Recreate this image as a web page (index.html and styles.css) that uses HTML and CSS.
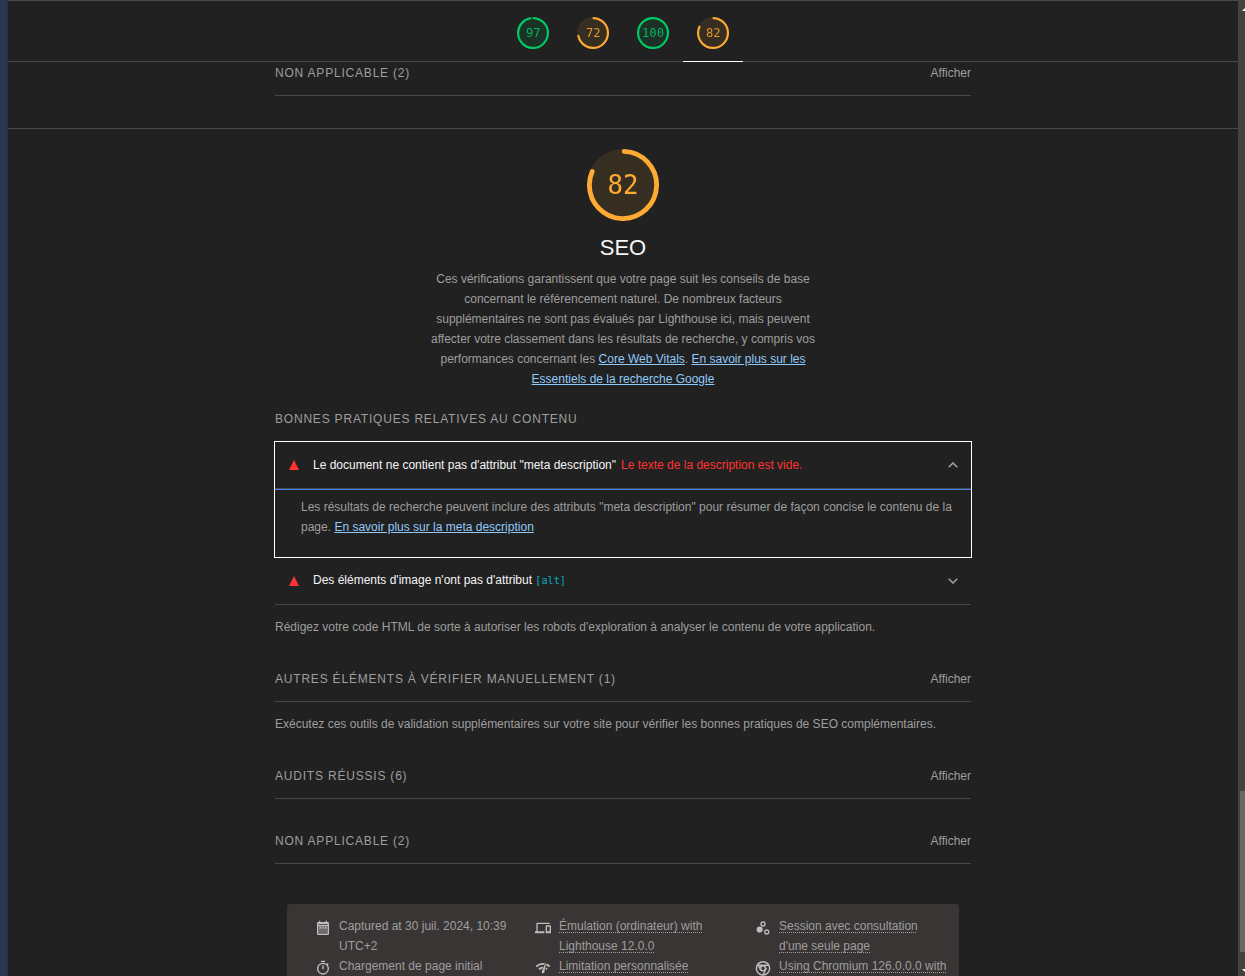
FILE: index.html
```html
<!DOCTYPE html>
<html lang="fr">
<head>
<meta charset="utf-8">
<title>Lighthouse – SEO</title>
<link rel="stylesheet" href="styles.css">
</head>
<body>
<div class="desktop-edge"></div>
<main class="report">
  <header class="scores">
    <a class="score pass"><svg viewBox="0 0 120 120"><circle class="base" cx="60" cy="60" r="60"/><circle class="arc" cx="60" cy="60" r="56" stroke-dasharray="337.3 351.86"/></svg><span>97</span></a>
    <a class="score average"><svg viewBox="0 0 120 120"><circle class="base" cx="60" cy="60" r="60"/><circle class="arc" cx="60" cy="60" r="56" stroke-dasharray="249.3 351.86"/></svg><span>72</span></a>
    <a class="score pass"><svg viewBox="0 0 120 120"><circle class="base" cx="60" cy="60" r="60"/><circle class="arc" cx="60" cy="60" r="56" stroke-dasharray="351.86 351.86"/></svg><span>100</span></a>
    <a class="score average selected"><svg viewBox="0 0 120 120"><circle class="base" cx="60" cy="60" r="60"/><circle class="arc" cx="60" cy="60" r="56" stroke-dasharray="284.5 351.86"/></svg><span>82</span></a>
  </header>
  <section class="previous">
    <div class="clump first"><span class="title">NON APPLICABLE (2)</span><span>Afficher</span></div>
  </section>
  <section class="category">
    <div class="gauge average"><svg viewBox="0 0 120 120"><circle class="base" cx="60" cy="60" r="60"/><circle class="arc" cx="60" cy="60" r="56" stroke-dasharray="284.5 351.86"/></svg><span>82</span></div>
    <h1>SEO</h1>
    <p class="intro">Ces vérifications garantissent que votre page suit les conseils de base<br>concernant le référencement naturel. De nombreux facteurs<br>supplémentaires ne sont pas évalués par Lighthouse ici, mais peuvent<br>affecter votre classement dans les résultats de recherche, y compris vos<br>performances concernant les <a>Core Web Vitals</a>. <a>En savoir plus sur les<br>Essentiels de la recherche Google</a></p>
    <h2 class="title">BONNES PRATIQUES RELATIVES AU CONTENU</h2>
    <article class="audit open">
      <div class="audit-head">
        <i class="triangle"></i><span class="audit-title">Le document ne contient pas d'attribut "meta description"</span><span class="error">Le texte de la description est vide.</span>
        <svg class="chevron" viewBox="0 0 10 6"><path d="M.7 5.3 5 1l4.300 4.300"/></svg>
      </div>
      <p class="audit-body">Les résultats de recherche peuvent inclure des attributs "meta description" pour résumer de façon concise le contenu de la<br>page. <a>En savoir plus sur la meta description</a></p>
    </article>
    <article class="audit closed">
      <div class="audit-head">
        <i class="triangle"></i><span class="audit-title">Des éléments d'image n'ont pas d'attribut <code>[alt]</code></span>
        <svg class="chevron" viewBox="0 0 10 6"><path d="M.7 .7 5 5 9.300 .7"/></svg>
      </div>
    </article>
    <p class="note">Rédigez votre code HTML de sorte à autoriser les robots d'exploration à analyser le contenu de votre application.</p>
    <div class="clump"><span class="title">AUTRES ÉLÉMENTS À VÉRIFIER MANUELLEMENT (1)</span><span>Afficher</span></div>
    <p class="note">Exécutez ces outils de validation supplémentaires sur votre site pour vérifier les bonnes pratiques de SEO complémentaires.</p>
    <div class="clump"><span class="title">AUDITS RÉUSSIS (6)</span><span>Afficher</span></div>
    <div class="clump"><span class="title">NON APPLICABLE (2)</span><span>Afficher</span></div>
    <footer class="meta">
      <div class="item"><svg viewBox="0 0 24 24"><path d="M5 22.500a2 2 0 0 1-2-2V5c0-1.100.9-2 2-2h1V1h2v2h8V1h2v2h1a2 2 0 0 1 2 2v15.500a2 2 0 0 1-2 2zM5 7.500h14V6.200H5zm0 13h14V9.500H5z" fill-rule="evenodd"/><path class="soft" d="M5 9.500h14v11H5z"/><path d="M7 10h2v3H7zm4 0h2v3h-2zm4 0h2v3h-2z"/></svg><span>Captured at 30 juil. 2024, 10:39<br>UTC+2</span></div>
      <div class="item"><svg viewBox="0 0 24 24"><path d="M4 6h18V4H4a2 2 0 0 0-2 2v11H0v3h14v-3H4zm19 2h-6a1 1 0 0 0-1 1v10c0 .55.45 1 1 1h6c.55 0 1-.45 1-1V9a1 1 0 0 0-1-1m-1 9h-4v-7h4z"/></svg><span><u>Émulation (ordinateur) with</u><br><u>Lighthouse 12.0.0</u></span></div>
      <div class="item"><svg viewBox="0 0 24 24"><circle cx="7" cy="14.400" r="4.600"/><path d="M17.600 14a4 4 0 1 0 0 8 4 4 0 0 0 0-8m0 6a2 2 0 1 1 0-4 2 2 0 0 1 0 4M12 2a4 4 0 1 0 0 8 4 4 0 0 0 0-8m0 6a2 2 0 1 1 0-4 2 2 0 0 1 0 4"/></svg><span><u>Session avec consultation</u><br><u>d'une seule page</u></span></div>
      <div class="item"><svg viewBox="0 0 24 24"><path d="M15 1H9v2h6zm-4 13h2V8h-2zm8.030-6.610 1.420-1.420a11 11 0 0 0-1.410-1.410l-1.420 1.420A9 9 0 1 0 21 13c0-2.120-.74-4.070-1.970-5.610M12 20a7 7 0 1 1 0-14 7 7 0 0 1 0 14"/></svg><span>Chargement de page initial</span></div>
      <div class="item"><svg viewBox="0 0 24 24"><path d="M15.900 5c-.17 0-.32.09-.41.23l-.07.15-5.180 11.650c-.16.29-.26.61-.26.96 0 1.110.9 2.010 2.010 2.010.96 0 1.770-.68 1.960-1.590l.01-.03L16.400 5.500c0-.28-.22-.5-.5-.5zM1 9l2 2c2.880-2.880 6.790-4.080 10.530-3.620l1.190-2.680C9.890 3.840 4.740 5.270 1 9zm20 2 2-2c-1.640-1.640-3.550-2.820-5.590-3.570l-.53 2.820c1.500.62 2.900 1.530 4.120 2.750zm-4 4 2-2c-.8-.8-1.700-1.420-2.660-1.890l-.55 2.920c.42.27.83.59 1.210.97zM5 13l2 2c1.130-1.130 2.560-1.790 4.030-2l1.280-2.880C9.680 10.040 7.010 10.990 5 13z"/></svg><span><u>Limitation personnalisée</u></span></div>
      <div class="item"><svg viewBox="0 0 24 24"><g class="line"><circle cx="12" cy="12.500" r="10"/><path d="M4 8h16.500M12 22.500l5-10.500M4 7l5 8.500"/><circle cx="12" cy="12.500" r="3.800"/></g></svg><span><u>Using Chromium 126.0.0.0 with</u></span></div>
    </footer>
  </section>
</main>
<aside class="scrollbar"><i class="up"></i><div class="thumb"></div><i class="down"></i></aside>
</body>
</html>
```
FILE: styles.css
```css
* { box-sizing: border-box; }
body {
  margin: 0;
  width: 1245px;
  height: 976px;
  overflow: hidden;
  display: flex;
  background: #212121;
  color: #9e9e9e;
  font: 12px/20px "Liberation Sans", Arial, sans-serif;
}
h1, h2, p { margin: 0; font-weight: 400; }
.desktop-edge { width: 8px; background: linear-gradient(90deg, #293752 75%, #222e44); }
.report { width: 1230px; height: 976px; overflow: hidden; }
.scores {
  height: 62px;
  border-top: 1px solid #484848;
  border-bottom: 1px solid #484848;
  display: flex;
  justify-content: center;
}
.score { width: 60px; height: 61px; padding-top: 16px; display: grid; justify-items: center; align-content: start; }
.score svg, .score span { grid-area: 1 / 1; }
.score svg { width: 32px; height: 32px; }
.score span { font: 12.180px/32px "DejaVu Sans Mono", monospace; will-change: transform; opacity: .85; }
.selected { border-bottom: 1px solid #fff; }
.pass { color: #00cc66; }
.average { color: #ffaa33; }
.base { fill: currentColor; opacity: .1; }
.arc { fill: none; stroke: currentColor; stroke-width: 8; stroke-linecap: round; transform: rotate(-87.950deg); transform-origin: 60px 60px; }
.previous { height: 67px; padding: 0 267px; border-bottom: 1px solid #484848; }
.category { padding: 20px 267px 0; }
.clump { display: flex; justify-content: space-between; height: 33px; margin-top: 32px; border-bottom: 1px solid #484848; }
.clump.first { margin-top: 0; padding-top: 1px; height: 34px; }
.title { font-size: 12px; letter-spacing: .8px; }
.gauge { width: 72px; height: 72px; margin: 0 auto; display: grid; }
.gauge svg, .gauge span { grid-area: 1 / 1; }
.gauge span { text-align: center; font: 25.780px/72px "DejaVu Sans Mono", monospace; will-change: transform; }
h1 { margin-top: 13px; text-align: center; color: #f5f5f5; font-size: 22px; line-height: 28px; }
.intro { margin-top: 7px; text-align: center; }
a { color: #90caf9; text-decoration: underline; }
.score { text-decoration: none; }
.pass.score { color: #00cc66; }
.average.score { color: #ffaa33; }
h2.title { margin-top: 20px; line-height: 20px; }
.audit.open { height: 117px; margin: 12px -1px 0; border: 1px solid #fff; }
.audit-head { display: flex; align-items: center; height: 47px; padding: 0 13px 0 14px; border-bottom: 1px solid #484848; }
.open .audit-head { height: 47px; padding-bottom: 1px; }
.closed .audit-head { height: 47px; padding-bottom: 1px; }
.closed .audit-title { margin-bottom: 2px; }
.triangle { border: 5px solid transparent; border-top: 0; border-bottom: 10px solid #ff3333; }
.audit-title { margin-left: 14px; color: #f5f5f5; white-space: pre; }
.error { margin-left: 5px; color: #ff3333; }
code { color: #00acc1; font: 10.200px "DejaVu Sans Mono", monospace; }
.chevron { width: 10px; height: 6px; margin-left: auto; fill: none; stroke: #9e9e9e; stroke-width: 1.600; }
.audit-body { padding: 7px 0 0 26px; border-top: 1px solid #4285f4; white-space: nowrap; }
.note { margin-top: 12px; }
.note + .clump { margin-top: 32px; }
.meta {
  width: 672px;
  height: 120px;
  margin: 40px auto 0;
  padding: 12px 0 0 28px;
  display: grid;
  grid-template-columns: repeat(3, 220px);
  align-content: start;
  border-radius: 3px;
  background: #393535;
}
.item { display: flex; gap: 8px; white-space: nowrap; }
.item svg { width: 16px; height: 16px; margin-top: 4px; flex: none; fill: #bdbdbd; }
.item .soft { opacity: .4; }
.line { fill: none; stroke: #bdbdbd; stroke-width: 2.200; }
u { text-decoration: underline dotted 1px; text-underline-offset: 2px; text-decoration-skip-ink: none; }
.scrollbar { width: 7px; height: 976px; padding-left: 2px; overflow: hidden; background: #424242; display: flex; flex-direction: column; }
.scrollbar i { flex: none; width: 10px; margin-left: 2px; border: 5px solid transparent; }
.up { margin-top: 6px; border-top: 0 !important; border-bottom: 5px solid #fff !important; }
.thumb { flex: none; height: 161px; margin-top: 780px; background: #686868; }
.down { margin-top: 17px; border-bottom: 0 !important; border-top: 5px solid #fff !important; }
```
